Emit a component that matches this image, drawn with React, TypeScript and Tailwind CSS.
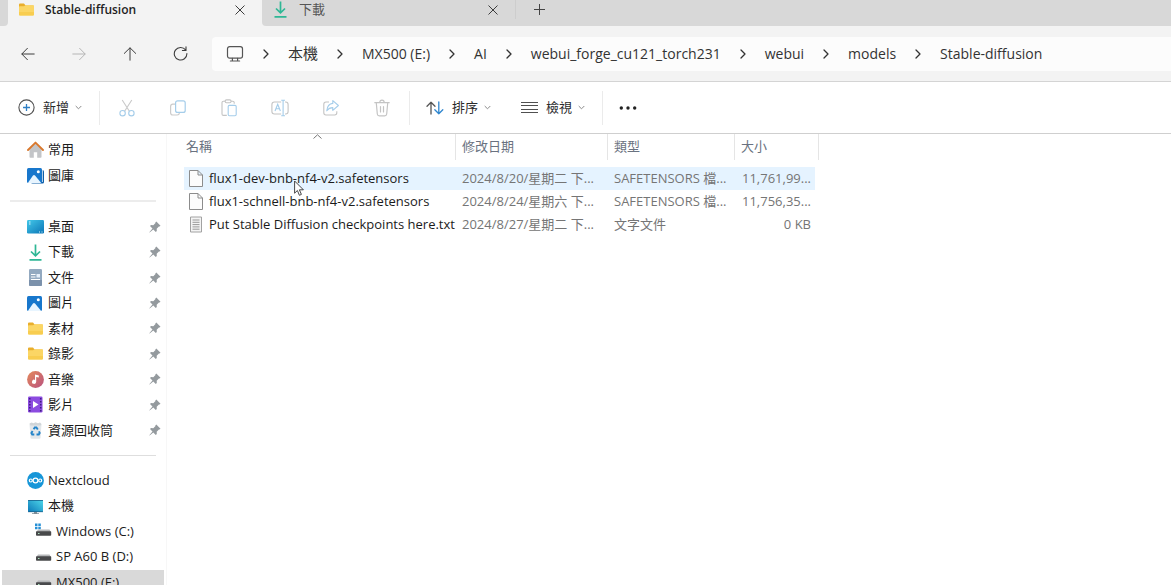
import React, { useState } from 'react';

interface IconProps {
  className?: string;
}

interface FileEntry {
  name: string;
  date: string;
  type: string;
  size: string;
  icon: 'blank' | 'text';
}

interface NavEntry {
  label: string;
  icon: React.ReactNode;
  pinned?: boolean;
  indent?: boolean;
}

/* ---------- Window icons ---------- */

function FolderIcon({ className }: IconProps) {
  return (
    <svg className={className} viewBox="0 0 17 17" aria-hidden="true">
      <path d="M1 3.6q0-1 1-1h4l1.6 1.8H15q1 0 1 1V8H1z" fill="#e9ae2c" />
      <path d="M1 6q0-.8.8-.8H6l1.5-1H15q1 0 1 1v8.2q0 1-1 1H2q-1 0-1-1z" fill="#fbd665" />
      <path d="M1 11h15v2.4q0 1-1 1H2q-1 0-1-1z" fill="#f8cd50" />
    </svg>
  );
}

function DownloadIcon({ className }: IconProps) {
  return (
    <svg className={className} viewBox="0 0 17 17" fill="none" stroke="#2fb795" strokeWidth="1.7" aria-hidden="true">
      <path d="M8.5 .5v11M4 7.5l4.5 4.3L13 7.5M2.5 15.8h12" />
    </svg>
  );
}

function CloseIcon({ className }: IconProps) {
  return (
    <svg className={className} viewBox="0 0 10 10" fill="none" stroke="#3c3c3c" aria-hidden="true">
      <path d="M.5 .5l9 9M9.5 .5l-9 9" />
    </svg>
  );
}

function ArrowIcon({ className }: IconProps) {
  return (
    <svg className={className} viewBox="0 0 14 14" fill="none" stroke="currentColor" strokeLinecap="round" strokeLinejoin="round" aria-hidden="true">
      <path d="M13.2 7H1M6.4 1.3L.8 7l5.6 5.7" />
    </svg>
  );
}

function ReloadIcon({ className }: IconProps) {
  return (
    <svg className={className} viewBox="0 0 15 15" fill="none" stroke="#3c3c3c" strokeWidth="1.1" strokeLinecap="round" strokeLinejoin="round" aria-hidden="true">
      <path d="M13.9 7.6A6.3 6.3 0 1 1 12.6 3.9M13 .9v3.6H9.4" />
    </svg>
  );
}

function MonitorIcon({ className }: IconProps) {
  return (
    <svg className={className} viewBox="0 0 18 18" fill="none" stroke="#555" strokeWidth="1.2" strokeLinecap="round" aria-hidden="true">
      <rect x="1.5" y="1.6" width="15" height="11.6" rx="2.2" />
      <path d="M6.4 13.4v2.4M11.6 13.4v2.4M4.4 16h9.2" />
    </svg>
  );
}

function ChevronRight({ className }: IconProps) {
  return (
    <svg className={className} viewBox="0 0 6 10" fill="none" stroke="#333" strokeWidth="1.3" strokeLinecap="round" strokeLinejoin="round" aria-hidden="true">
      <path d="M1 1l4 4-4 4" />
    </svg>
  );
}

function ChevronDown({ className }: IconProps) {
  return (
    <svg className={className} viewBox="0 0 7 5" fill="none" stroke="#8a8a8a" aria-hidden="true">
      <path d="M.7 1l2.8 2.8L6.3 1" />
    </svg>
  );
}

/* ---------- Toolbar icons ---------- */

function PlusCircleIcon({ className }: IconProps) {
  return (
    <svg className={className} viewBox="0 0 17 17" fill="none" aria-hidden="true">
      <circle cx="8.5" cy="8.5" r="7.6" stroke="#505050" strokeWidth="1.1" />
      <path d="M8.5 5v7M5 8.5h7" stroke="#2f7fc4" strokeWidth="1.3" />
    </svg>
  );
}

function CutIcon({ className }: IconProps) {
  return (
    <svg className={className} viewBox="0 0 18 18" fill="none" strokeWidth="1.1" aria-hidden="true">
      <path d="M4.2 1l7.2 11.2M13.8 1L6.6 12.2" stroke="#c9c9c9" />
      <circle cx="4.6" cy="14.2" r="2.7" stroke="#a5cdea" />
      <circle cx="13.4" cy="14.2" r="2.7" stroke="#a5cdea" />
    </svg>
  );
}

function CopyIcon({ className }: IconProps) {
  return (
    <svg className={className} viewBox="0 0 18 18" fill="none" strokeWidth="1.2" aria-hidden="true">
      <path d="M6 5.2H3.8Q1.6 5.2 1.6 7.4v6.4q0 2.2 2.2 2.2h4.4q2 0 2.2-2" stroke="#cccccc" />
      <rect x="6.6" y="1.8" width="9.6" height="11.6" rx="2" stroke="#a5cdea" />
    </svg>
  );
}

function PasteIcon({ className }: IconProps) {
  return (
    <svg className={className} viewBox="0 0 18 18" fill="none" strokeWidth="1.1" aria-hidden="true">
      <path d="M6.8 16.4H3.4q-1.4 0-1.4-1.4V3.6q0-1.4 1.4-1.4h1.8M11 2.2h1.8q1.4 0 1.4 1.4v1.2" stroke="#c4c4c4" />
      <rect x="5.2" y=".9" width="5.8" height="2.8" rx="1.2" stroke="#c4c4c4" />
      <rect x="8.2" y="6.4" width="8" height="10.4" rx="1.2" stroke="#a5cdea" />
    </svg>
  );
}

function RenameIcon({ className }: IconProps) {
  return (
    <svg className={className} viewBox="0 0 18 18" fill="none" strokeWidth="1.1" aria-hidden="true">
      <path d="M10.2 15H3.4Q.9 15 .9 12.5v-7Q.9 3 3.4 3h6.8M14 3h.7q2.4 0 2.4 2.5v7Q17.1 15 14.7 15H14" stroke="#c4c4c4" />
      <path d="M12.1 1.2v15.6M10.2 1.2H14M10.2 16.8H14M4 12l2.7-6.8L9.4 12M4.9 9.8h3.6" stroke="#a5cdea" />
    </svg>
  );
}

function ShareIcon({ className }: IconProps) {
  return (
    <svg className={className} viewBox="0 0 18 18" fill="none" strokeWidth="1.1" strokeLinejoin="round" aria-hidden="true">
      <path d="M7 3H4Q1.8 3 1.8 5.2v8.6Q1.8 16 4 16h8.6q2.2 0 2.2-2.2v-1.6" stroke="#c4c4c4" />
      <path d="M10.8 1.6l5.6 4.9-5.6 4.8V8.6Q7 8.6 4.8 11.8 5.4 4.9 10.8 4.4z" stroke="#a5cdea" />
    </svg>
  );
}

function TrashIcon({ className }: IconProps) {
  return (
    <svg className={className} viewBox="0 0 18 18" fill="none" stroke="#c4c4c4" strokeWidth="1.2" strokeLinecap="round" aria-hidden="true">
      <path d="M1.8 3.7h14.4M6.8 3.5q0-2.3 2.2-2.3t2.2 2.3M3.3 4l1 11q.2 1.8 2 1.8h5.4q1.8 0 2-1.8l1-11M7.5 7.5V13M10.5 7.5V13" />
    </svg>
  );
}

function SortIcon({ className }: IconProps) {
  return (
    <svg className={className} viewBox="0 0 18 14" fill="none" strokeWidth="1.3" strokeLinecap="round" strokeLinejoin="round" aria-hidden="true">
      <path d="M5 13V1.2M1 5.2l4-4 4 4" stroke="#555" />
      <path d="M12.8 1v11.8M8.8 8.8l4 4 4-4" stroke="#2f86cf" />
    </svg>
  );
}

function ViewIcon({ className }: IconProps) {
  return (
    <svg className={className} viewBox="0 0 17 13" fill="none" stroke="#505050" aria-hidden="true">
      <path d="M0 1.5h17M0 4.5h17M0 8.5h17M0 11.5h17" />
    </svg>
  );
}

function MoreIcon({ className }: IconProps) {
  return (
    <svg className={className} viewBox="0 0 18 4" fill="#222" aria-hidden="true">
      <circle cx="2.3" cy="2" r="1.7" />
      <circle cx="9" cy="2" r="1.7" />
      <circle cx="15.7" cy="2" r="1.7" />
    </svg>
  );
}

/* ---------- Sidebar icons ---------- */

function HomeIcon({ className }: IconProps) {
  return (
    <svg className={className} viewBox="0 0 17 17" fill="none" aria-hidden="true">
      <path d="M2.5 8l6-5.5 6 5.5v8q0 .8-.8.8h-3.5v-5.5H6.8v5.5H3.3q-.8 0-.8-.8z" fill="#c3c5c8" />
      <path d="M1 9l7.5-7.4L16 9" stroke="#d9782d" strokeWidth="1.9" strokeLinecap="round" strokeLinejoin="round" />
    </svg>
  );
}

function PictureIcon({ className, stacked }: IconProps & { stacked?: boolean }) {
  return (
    <svg className={className} viewBox="0 0 17 17" aria-hidden="true">
      {stacked && <rect x="4" y="3" width="13" height="13.5" rx="1.5" fill="#0d5ea8" />}
      {stacked && <path d="M15.5 3v12" stroke="#fff" strokeWidth=".7" />}
      <rect x="0" y="1" width="15" height="15" rx="1.5" fill="#1877cc" />
      <path d="M1 15.8L6 8.5q1-1.2 2 0l6 7.3q-.4.2-1 .2H2q-.6 0-1-.2z" fill="#e8f5ff" />
      <circle cx="11.3" cy="4.7" r="1.5" fill="#fff" />
    </svg>
  );
}

function DesktopIcon({ className }: IconProps) {
  return (
    <svg className={className} viewBox="0 0 17 17" aria-hidden="true">
      <defs>
        <linearGradient id="desktop" x1="0" y1="0" x2="1" y2="1">
          <stop offset="0" stopColor="#43c8e9" />
          <stop offset="1" stopColor="#0b75b6" />
        </linearGradient>
      </defs>
      <rect x="0" y="2" width="17" height="13.5" rx="1.2" fill="url(#desktop)" />
      <path d="M2 4h1.5M2 6h1.5M12 14h1M14.5 14h1" stroke="#d8f4ff" />
    </svg>
  );
}

function DocumentIcon({ className }: IconProps) {
  return (
    <svg className={className} viewBox="0 0 17 17" aria-hidden="true">
      <rect x="2" y="0" width="13" height="17" rx="1.3" fill="#93a9c0" />
      <path d="M2 11h13v4.7q0 1.3-1.3 1.3H3.3Q2 17 2 15.7z" fill="#7b91ab" />
      <path d="M4 5.5h4.5M4 8h4.5M4 10.5h9" stroke="#fff" />
      <rect x="9.5" y="5" width="3.5" height="3.5" fill="#e5effa" />
    </svg>
  );
}

function MusicIcon({ className }: IconProps) {
  return (
    <svg className={className} viewBox="0 0 17 17" aria-hidden="true">
      <defs>
        <linearGradient id="music" x1="0" y1="0" x2="1" y2="1">
          <stop offset="0" stopColor="#e58a5c" />
          <stop offset="1" stopColor="#b9527f" />
        </linearGradient>
      </defs>
      <circle cx="8.5" cy="8.5" r="8.4" fill="url(#music)" />
      <path d="M8 3.5l3.8 1v2L9.2 6v4.8a2.1 2.1 0 1 1-1.2-1.9z" fill="#fff" />
    </svg>
  );
}

function VideoIcon({ className }: IconProps) {
  return (
    <svg className={className} viewBox="0 0 17 17" aria-hidden="true">
      <rect x="1" y=".5" width="14.5" height="16" rx="1.3" fill="#8c4be0" />
      <path d="M2.8 2v13.5M13.7 2v13.5" stroke="#3f1c80" strokeWidth="1.5" strokeDasharray="1.6 1.4" />
      <path d="M6 5l5.5 3.5L6 12z" fill="#fff" />
    </svg>
  );
}

function RecycleIcon({ className }: IconProps) {
  return (
    <svg className={className} viewBox="0 0 17 17" aria-hidden="true">
      <path d="M2.5 2h12l-1 14q-.1.8-1 .8h-8q-.9 0-1-.8z" fill="#e3e7ea" />
      <path d="M2.5 1.5l2-1 2 .8 2-1 2.5 1 2-.8 1.5 1.5-1 1.5H3.5z" fill="#d0d5d8" />
      <path d="M6.6 7.2l1.2-1.7h1.6l1.4 2M11.9 9.4l.8 1.5-.9 1.6H9.5M7.3 12.5H5.2l-.8-1.5 1.2-2" fill="none" stroke="#2384c9" strokeWidth="1.9" />
    </svg>
  );
}

function NextcloudIcon({ className }: IconProps) {
  return (
    <svg className={className} viewBox="0 0 17 17" fill="none" stroke="#fff" strokeWidth="1.2" aria-hidden="true">
      <circle cx="8.5" cy="8.5" r="8.4" fill="#1796d8" stroke="none" />
      <circle cx="8.5" cy="8.5" r="2.4" />
      <circle cx="3.8" cy="8.5" r="1.5" />
      <circle cx="13.2" cy="8.5" r="1.5" />
    </svg>
  );
}

function ComputerIcon({ className }: IconProps) {
  return (
    <svg className={className} viewBox="0 0 17 17" aria-hidden="true">
      <defs>
        <linearGradient id="computer" x1="0" y1="1" x2="1" y2="0">
          <stop offset="0" stopColor="#0b78b8" />
          <stop offset="1" stopColor="#4fd8ea" />
        </linearGradient>
      </defs>
      <rect x="1" y="2" width="15" height="12" rx=".8" fill="url(#computer)" />
      <path d="M1 2.5h15M1 13.7h15" stroke="#17608a" strokeWidth=".8" />
      <path d="M7 14h3v1.2h2v.9H5v-.9h2z" fill="#7d8d98" />
    </svg>
  );
}

function DriveIcon({ className, system }: IconProps & { system?: boolean }) {
  return (
    <svg className={className} viewBox="0 0 17 17" aria-hidden="true">
      {system && <path d="M0 .5h2.5V3H0zM3.3 .5h2.5V3H3.3zM0 3.8h2.5v2.5H0zM3.3 3.8h2.5v2.5H3.3z" fill="#2690d6" />}
      <path d="M3 6.5h11.500L16 9H1.300z" fill="#b5b7b9" />
      <rect x="1" y="8.3" width="15.2" height="4.4" rx=".8" fill="#48494b" />
      <path d="M3 10.5h1.5" stroke="#b9f4cc" strokeWidth=".9" />
    </svg>
  );
}

function PinIcon({ className }: IconProps) {
  return (
    <svg className={className} viewBox="0 0 12 12" aria-hidden="true">
      <path d="M7.3 .5l4.2 4.2-1 .9-.6-.1-2.2 2.2.1 2.2-1 1L4.300 8.400.6 11.600l-.3-.3L3.500 7.600 1 5.100l1-1 2.300.1L6.500 2l-.2-.6z" fill="#949a9e" />
    </svg>
  );
}

function FileIcon({ kind }: { kind: FileEntry['icon'] }) {
  if (kind === 'text') {
    return (
      <svg className="h-[17px] w-[14px] shrink-0" viewBox="0 0 14 17" fill="none" aria-hidden="true">
        <path d="M1.5 1h11v15h-11z" fill="#f4f4f4" stroke="#a2a2a2" />
        <path d="M3.5 4h7M3.5 6.3h7M3.5 8.6h7M3.5 10.9h7M3.5 13.2h7" stroke="#999" />
      </svg>
    );
  }
  return (
    <svg className="h-[17px] w-[14px] shrink-0" viewBox="0 0 14 17" fill="#fcfcfc" stroke="#8c8c8c" aria-hidden="true">
      <path d="M.5 .5H9L13.500 5v11.500H.5zM9 .5V5h4.500" />
    </svg>
  );
}

/* ---------- Data ---------- */

const ICON = 'h-[17px] w-[17px] shrink-0';

const quickLinks: NavEntry[] = [
  { label: '常用', icon: <HomeIcon className={ICON} /> },
  { label: '圖庫', icon: <PictureIcon className={ICON} stacked /> },
];

const pinnedLinks: NavEntry[] = [
  { label: '桌面', icon: <DesktopIcon className={ICON} />, pinned: true },
  { label: '下載', icon: <DownloadIcon className={ICON} />, pinned: true },
  { label: '文件', icon: <DocumentIcon className={ICON} />, pinned: true },
  { label: '圖片', icon: <PictureIcon className={ICON} />, pinned: true },
  { label: '素材', icon: <FolderIcon className={ICON} />, pinned: true },
  { label: '錄影', icon: <FolderIcon className={ICON} />, pinned: true },
  { label: '音樂', icon: <MusicIcon className={ICON} />, pinned: true },
  { label: '影片', icon: <VideoIcon className={ICON} />, pinned: true },
  { label: '資源回收筒', icon: <RecycleIcon className={ICON} />, pinned: true },
];

const devices: NavEntry[] = [
  { label: 'Nextcloud', icon: <NextcloudIcon className={ICON} /> },
  { label: '本機', icon: <ComputerIcon className={ICON} /> },
  { label: 'Windows (C:)', icon: <DriveIcon className={ICON} system />, indent: true },
  { label: 'SP A60 B (D:)', icon: <DriveIcon className={ICON} />, indent: true },
  { label: 'MX500 (E:)', icon: <DriveIcon className={ICON} />, indent: true },
];

const files: FileEntry[] = [
  { name: 'flux1-dev-bnb-nf4-v2.safetensors', date: '2024/8/20/星期二 下...', type: 'SAFETENSORS 檔...', size: '11,761,99...', icon: 'blank' },
  { name: 'flux1-schnell-bnb-nf4-v2.safetensors', date: '2024/8/24/星期六 下...', type: 'SAFETENSORS 檔...', size: '11,756,35...', icon: 'blank' },
  { name: 'Put Stable Diffusion checkpoints here.txt', date: '2024/8/27/星期二 下...', type: '文字文件', size: '0 KB', icon: 'text' },
];

const crumbs = ['本機', 'MX500 (E:)', 'AI', 'webui_forge_cu121_torch231', 'webui', 'models', 'Stable-diffusion'];

const editActions = [
  { label: '剪下', Icon: CutIcon },
  { label: '複製', Icon: CopyIcon },
  { label: '貼上', Icon: PasteIcon },
  { label: '重新命名', Icon: RenameIcon },
  { label: '共用', Icon: ShareIcon },
  { label: '刪除', Icon: TrashIcon },
];

/* ---------- Sections ---------- */

function TabBar() {
  return (
    <div className="flex h-[26px] shrink-0 bg-[#f3f3f3]">
      <div className="w-2 shrink-0 rounded-br bg-[#d8d8d8]" />
      <div className="flex w-[254px] shrink-0 items-center pr-[17px] pb-[7px] pl-[10px]">
        <FolderIcon className="h-[17px] w-[17px]" />
        <span className="ml-[10px] flex-1 text-[12px] font-semibold text-[#1f1f1f]">Stable-diffusion</span>
        <button type="button" aria-label="關閉分頁">
          <CloseIcon className="h-[10px] w-[10px]" />
        </button>
      </div>
      <div className="flex flex-1 items-center rounded-bl bg-[#d8d8d8] pb-[7px]">
        <div className="flex w-[254px] shrink-0 items-center border-r border-[#cdcdcd] pr-[17px] pl-[10px]">
          <DownloadIcon className="h-[17px] w-[17px]" />
          <span className="ml-[10px] flex-1 text-[13px] text-[#555]">下載</span>
          <button type="button" aria-label="關閉分頁">
            <CloseIcon className="h-[10px] w-[10px]" />
          </button>
        </div>
        <button type="button" aria-label="新增分頁" className="ml-[18px]">
          <svg className="h-[11px] w-[11px]" viewBox="0 0 11 11" stroke="#444" aria-hidden="true">
            <path d="M5.5 0v11M0 5.5h11" />
          </svg>
        </button>
      </div>
    </div>
  );
}

function AddressBar() {
  return (
    <div className="flex h-[56px] shrink-0 items-center border-b border-[#d4d4d4] bg-[#f3f3f3]">
      <div className="flex w-[212px] shrink-0 items-center pl-[2px] text-[#3c3c3c]">
        <button type="button" aria-label="上一頁" className="flex w-[51px] justify-center">
          <ArrowIcon className="h-[14px] w-[14px]" />
        </button>
        <button type="button" aria-label="下一頁" disabled className="flex w-[51px] justify-center text-[#b5b5b5]">
          <ArrowIcon className="h-[14px] w-[14px] rotate-180" />
        </button>
        <button type="button" aria-label="上一層" className="flex w-[51px] justify-center">
          <ArrowIcon className="h-[14px] w-[14px] rotate-90" />
        </button>
        <button type="button" aria-label="重新整理" className="flex w-[51px] justify-center">
          <ReloadIcon className="h-[15px] w-[15px]" />
        </button>
      </div>
      <nav aria-label="路徑" className="flex h-[34px] min-w-0 flex-1 items-center rounded-l bg-[#fcfcfc] pl-[14px] text-[14px] text-[#333]">
        <MonitorIcon className="h-[18px] w-[18px] shrink-0" />
        {crumbs.map((crumb, index) => (
          <React.Fragment key={crumb}>
            <span className="flex w-[44px] shrink-0 justify-center">
              <ChevronRight className="h-[10px] w-[6px]" />
            </span>
            <a href="#" className={index === 0 ? 'text-[15px] whitespace-nowrap' : 'whitespace-nowrap'}>
              {crumb}
            </a>
          </React.Fragment>
        ))}
      </nav>
    </div>
  );
}

function Toolbar() {
  return (
    <div className="flex h-[52px] shrink-0 items-center border-b border-[#cfcfcf] bg-white text-[13px] text-[#2b2b2b]">
      <button type="button" className="flex w-[99px] items-center pl-[18px]">
        <PlusCircleIcon className="h-[17px] w-[17px]" />
        <span className="ml-2">新增</span>
        <ChevronDown className="ml-[6px] h-[5px] w-[7px]" />
      </button>
      <div className="mr-px h-[34px] w-px bg-[#ebebeb]" />
      {editActions.map(({ label, Icon }) => (
        <button key={label} type="button" aria-label={label} disabled className="flex w-[51px] justify-center">
          <Icon className="h-[18px] w-[18px]" />
        </button>
      ))}
      <div className="ml-[2px] h-[34px] w-px bg-[#ebebeb]" />
      <button type="button" className="ml-4 flex items-center">
        <SortIcon className="h-[14px] w-[18px]" />
        <span className="ml-2">排序</span>
        <ChevronDown className="ml-[6px] h-[5px] w-[7px]" />
      </button>
      <button type="button" className="ml-[30px] flex items-center">
        <ViewIcon className="h-[13px] w-[17px]" />
        <span className="ml-2">檢視</span>
        <ChevronDown className="ml-[6px] h-[5px] w-[7px]" />
      </button>
      <div className="ml-[17px] h-[34px] w-px bg-[#ebebeb]" />
      <button type="button" aria-label="更多" className="ml-4">
        <MoreIcon className="h-[4px] w-[18px]" />
      </button>
    </div>
  );
}

function NavItem({ entry, selected }: { entry: NavEntry; selected?: boolean }) {
  return (
    <a
      href="#"
      className={`mr-[2px] ml-[2px] flex items-center whitespace-nowrap ${entry.indent ? 'pl-[33px]' : 'pl-[25px]'} ${selected ? 'bg-[#d9d9d9]' : ''}`}
    >
      {entry.icon}
      <span className="ml-1 flex-1">{entry.label}</span>
      {entry.pinned && <PinIcon className="mr-[3px] h-[12px] w-[12px]" />}
    </a>
  );
}

function Sidebar() {
  return (
    <aside className="w-[167px] shrink-0 border-r border-[#f7f7f7] pt-[3px] text-[13px] text-[#1b1b1b]">
      <div className="grid h-[51px] auto-rows-fr">
        {quickLinks.map((entry) => (
          <NavItem key={entry.label} entry={entry} />
        ))}
      </div>
      <hr className="my-3 mr-[10px] ml-[10px] border-t-2 border-[#ececec]" />
      <div className="grid h-[229px] auto-rows-fr">
        {pinnedLinks.map((entry) => (
          <NavItem key={entry.label} entry={entry} />
        ))}
      </div>
      <hr className="my-3 mr-[10px] ml-[10px] border-t border-[#dedede]" />
      <div className="grid h-[127px] auto-rows-fr">
        {devices.map((entry) => (
          <NavItem key={entry.label} entry={entry} selected={entry.label === 'MX500 (E:)'} />
        ))}
      </div>
    </aside>
  );
}

function FileList() {
  const [activeFile, setActiveFile] = useState(files[0].name);

  return (
    <main className="relative min-w-0 flex-1 pl-[17px]">
      <table className="w-[635px] table-fixed border-separate border-spacing-0 text-left text-[13px] whitespace-nowrap">
        <colgroup>
          <col className="w-[272px]" />
          <col className="w-[152px]" />
          <col className="w-[127px]" />
          <col className="w-[80px]" />
          <col className="w-[4px]" />
        </colgroup>
        <thead className="text-[#6a7280]">
          <tr className="h-[26px]">
            <th scope="col" className="border-r border-[#e5e5e5] pl-[2px] font-normal">名稱</th>
            <th scope="col" className="border-r border-[#e5e5e5] pl-[6px] font-normal">修改日期</th>
            <th scope="col" className="border-r border-[#e5e5e5] pl-[6px] font-normal">類型</th>
            <th scope="col" className="pl-[6px] font-normal">大小</th>
            <td className="border-r border-[#e5e5e5]" />
          </tr>
        </thead>
        <tbody className="text-[#757575] before:block before:h-[7px] before:content-['']">
          {files.map((file) => {
            const cell = file.name === activeFile ? 'bg-[#e5f3ff]' : '';
            return (
              <tr key={file.name} className="h-[23px]" onClick={() => setActiveFile(file.name)}>
                <td className={`pl-[5px] text-[#1b1b1b] ${cell}`}>
                  <div className="flex items-center gap-[6px]">
                    <FileIcon kind={file.icon} />
                    {file.name}
                  </div>
                </td>
                <td className={`pl-[6px] ${cell}`}>{file.date}</td>
                <td className={`pl-[6px] ${cell}`}>{file.type}</td>
                <td className={`pr-1 text-right ${cell}`}>{file.size}</td>
                <td />
              </tr>
            );
          })}
        </tbody>
      </table>

      {/* Sort direction marker over the name column */}
      <svg className="absolute top-0 left-[146px] h-[5px] w-[9px]" viewBox="0 0 9 5" fill="none" stroke="#777" aria-hidden="true">
        <path d="M.5 4.5l4-3.7 4 3.7" />
      </svg>

      {/* Mouse pointer */}
      <svg className="absolute top-[46px] left-[127px] h-[17px] w-[11px]" viewBox="0 0 11 17" fill="#fff" stroke="#333" strokeWidth=".9" aria-hidden="true">
        <path d="M.6 1v12.2l2.8-2.7 2 4.8 2-.9-2-4.6h4z" />
      </svg>
    </main>
  );
}

export default function App() {
  return (
    <div className="flex h-screen flex-col overflow-hidden bg-white font-['Open_Sans','Noto_Sans_CJK_TC',sans-serif]">
      <TabBar />
      <AddressBar />
      <Toolbar />
      <div className="flex min-h-0 flex-1">
        <Sidebar />
        <FileList />
      </div>
    </div>
  );
}
